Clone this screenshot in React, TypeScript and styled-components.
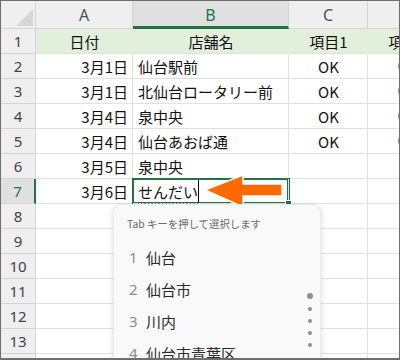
import React from 'react';
import styled, { createGlobalStyle } from 'styled-components';

const GlobalStyle = createGlobalStyle`
  html, body {
    margin: 0;
    padding: 0;
    background: #ffffff;
  }
  body {
    font-family: "Noto Sans CJK JP", "Noto Sans", sans-serif;
    color: #111111;
  }
`;

const colors = {
  excelGreen: '#217346',
  headerBg: '#efefef',
  headerSelected: '#e0e0e0',
  headerLine: '#d4d4d4',
  gridLine: '#e1e1e1',
  band: '#e2efda',
  orange: '#ff6a00',
  mark: '#ed7d31',
};

const Frame = styled.div`
  position: relative;
  width: 400px;
  height: 360px;
  box-sizing: border-box;
  border: 1px solid #6e6e6e;
  border-bottom-width: 2px;
  overflow: hidden;
  background: #ffffff;
`;

const Sheet = styled.div`
  display: grid;
  grid-template-columns: 35px 97px 156px 79px 79px;
  grid-template-rows: 28px;
  grid-auto-rows: 25px;
`;

const CornerCell = styled.div`
  position: relative;
  background: ${colors.headerBg};
  border-right: 1px solid ${colors.headerLine};
  border-bottom: 1px solid ${colors.headerLine};
  box-sizing: border-box;

  &::after {
    content: '';
    position: absolute;
    right: 2px;
    bottom: 2px;
    width: 17px;
    height: 17px;
    background: #d6d6d6;
    clip-path: polygon(100% 0, 100% 100%, 0 100%);
  }
`;

const ColHeader = styled.div<{ $selected?: boolean }>`
  display: flex;
  align-items: center;
  justify-content: center;
  box-sizing: border-box;
  background: ${(p) => (p.$selected ? colors.headerSelected : colors.headerBg)};
  border-right: 1px solid ${colors.headerLine};
  border-bottom: ${(p) => (p.$selected ? `3px solid ${colors.excelGreen}` : `1px solid ${colors.headerLine}`)};
  padding-top: ${(p) => (p.$selected ? '2px' : '0')};
  font-family: "Noto Sans", sans-serif;
  font-size: 16px;
  color: ${(p) => (p.$selected ? colors.excelGreen : '#505050')};
`;

const RowHeader = styled.div<{ $selected?: boolean }>`
  display: flex;
  align-items: center;
  justify-content: center;
  box-sizing: border-box;
  background: ${(p) => (p.$selected ? colors.headerSelected : colors.headerBg)};
  border-right: ${(p) => (p.$selected ? `2px solid ${colors.excelGreen}` : `1px solid ${colors.headerLine}`)};
  border-bottom: 1px solid ${colors.headerLine};
  font-family: "Noto Sans", sans-serif;
  font-size: 15px;
  color: ${(p) => (p.$selected ? colors.excelGreen : '#444444')};
`;

type Align = 'left' | 'center' | 'right';

const justify: Record<Align, string> = {
  left: 'flex-start',
  center: 'center',
  right: 'flex-end',
};

const Cell = styled.div<{ $align: Align; $band?: boolean }>`
  display: flex;
  align-items: center;
  justify-content: ${(p) => justify[p.$align]};
  box-sizing: border-box;
  padding: 0 4px 0 5px;
  background: ${(p) => (p.$band ? colors.band : '#ffffff')};
  border-right: 1px solid ${(p) => (p.$band ? colors.band : colors.gridLine)};
  border-bottom: 1px solid ${colors.gridLine};
  font-size: 15px;
  color: #111111;
  white-space: nowrap;
  overflow: hidden;
`;

const MarkCell = styled(Cell)`
  padding-left: 30px;
`;

const Mark = styled.span`
  flex: none;
  width: 10px;
  height: 10px;
  border: 2px solid ${colors.mark};
  border-radius: 50%;
`;

const ActiveCell = styled(Cell)`
  position: relative;
  overflow: visible;
  z-index: 2;
  box-shadow: 0 0 0 1px ${colors.excelGreen}, inset 0 0 0 1px ${colors.excelGreen};
`;

const FillHandle = styled.span`
  position: absolute;
  right: -4px;
  bottom: -4px;
  width: 5px;
  height: 5px;
  background: ${colors.excelGreen};
  border: 1px solid #ffffff;
`;

const Composing = styled.span`
  text-decoration: underline wavy #555555;
  text-decoration-thickness: 1px;
  text-underline-offset: 3px;
`;

const Caret = styled.span`
  display: inline-block;
  width: 1px;
  height: 23px;
  background: #000000;
`;

const Arrow = styled.svg`
  position: absolute;
  left: 202px;
  top: 172px;
  z-index: 3;
`;

const Candidates = styled.div`
  position: absolute;
  left: 112px;
  top: 203px;
  width: 208px;
  height: 200px;
  z-index: 4;
  box-sizing: border-box;
  background: #f9f9f9;
  border: 1px solid #ebebeb;
  border-radius: 8px;
  box-shadow: 0 2px 6px rgba(0, 0, 0, 0.14);
  display: flex;
  flex-direction: column;
`;

const Hint = styled.div`
  height: 36px;
  display: flex;
  align-items: center;
  padding-left: 13px;
  font-size: 10.4px;
  color: #6b6b6b;
`;

const Candidate = styled.div`
  height: 32px;
  display: flex;
  align-items: center;
  padding-left: 15px;
  font-size: 15px;
  color: #2b2b2b;
`;

const CandidateNo = styled.span`
  width: 17px;
  font-family: "Noto Sans", sans-serif;
  color: #8c8c8c;
`;

const ScrollDots = styled.div`
  position: absolute;
  left: 193px;
  top: 88px;
  width: 6px;
  display: flex;
  flex-direction: column;
  align-items: center;
  gap: 8px;
`;

const Dot = styled.span<{ $big?: boolean }>`
  width: ${(p) => (p.$big ? '6px' : '4px')};
  height: ${(p) => (p.$big ? '6px' : '4px')};
  border-radius: 50%;
  background: #8f8f8f;
`;

type Row = [string, string, string, boolean];

const header = ['日付', '店舗名', '項目1', '項目2'];

const rows: Row[] = [
  ['3月1日', '仙台駅前', 'OK', true],
  ['3月1日', '北仙台ロータリー前', 'OK', true],
  ['3月4日', '泉中央', 'OK', true],
  ['3月4日', '仙台あおば通', 'OK', true],
  ['3月5日', '泉中央', '', false],
  ['3月6日', '', '', false],
  ['', '', '', false],
  ['', '', '', false],
  ['', '', '', false],
  ['', '', '', false],
  ['', '', '', false],
  ['', '', '', false],
  ['', '', '', false],
];

const columns = ['A', 'B', 'C', 'D'];
const activeRow = 7;

const candidates = ['仙台', '仙台市', '川内', '仙台市青葉区'];

const App = () => (
  <>
    <GlobalStyle />
    <Frame>
      <Sheet>
        <CornerCell />
        {columns.map((c) => (
          <ColHeader key={c} $selected={c === 'B'}>
            {c}
          </ColHeader>
        ))}

        <RowHeader>1</RowHeader>
        {header.map((h) => (
          <Cell key={h} $align="center" $band>
            {h}
          </Cell>
        ))}

        {rows.map((row, i) => {
          const n = i + 2;
          return (
            <React.Fragment key={n}>
              <RowHeader $selected={n === activeRow}>{n}</RowHeader>
              <Cell $align="right">{row[0]}</Cell>
              {n === activeRow ? (
                <ActiveCell $align="left">
                  <Composing>せんだい</Composing>
                  <Caret />
                  <FillHandle />
                </ActiveCell>
              ) : (
                <Cell $align="left">{row[1]}</Cell>
              )}
              <Cell $align="center">{row[2]}</Cell>
              <MarkCell $align="left">{row[3] && <Mark />}</MarkCell>
            </React.Fragment>
          );
        })}
      </Sheet>

      <Arrow width="84" height="38" viewBox="0 0 84 38">
        <path
          d="M2 17 L40 2 L40 11 L79 11 L79 23 L40 23 L40 34 Z"
          fill={colors.orange}
          stroke="#ffffff"
          strokeWidth="1.5"
        />
      </Arrow>

      <Candidates>
        <Hint>Tab キーを押して選択します</Hint>
        {candidates.map((c, i) => (
          <Candidate key={c}>
            <CandidateNo>{i + 1}</CandidateNo>
            {c}
          </Candidate>
        ))}
        <ScrollDots>
          <Dot $big />
          <Dot />
          <Dot />
          <Dot />
          <Dot />
        </ScrollDots>
      </Candidates>
    </Frame>
  </>
);

export default App;
